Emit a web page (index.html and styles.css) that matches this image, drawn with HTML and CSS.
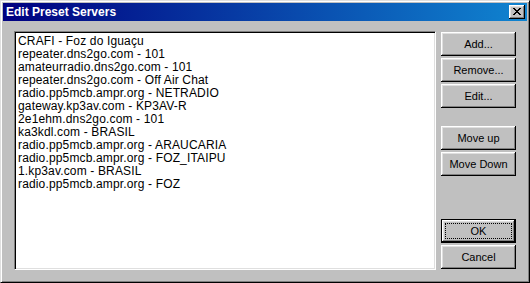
FILE: index.html
```html
<!DOCTYPE html>
<html>
<head>
<meta charset="utf-8">
<link rel="stylesheet" href="styles.css">
</head>
<body>
<div class="window">
  <div class="titlebar">
    <span class="title">Edit Preset Servers</span>
    <span class="close"><svg width="8" height="7" viewBox="0 0 8 7"><path d="M0 0h2v1h1v1h2v-1h1v-1h2v1h-1v1h-1v1h-1v1h1v1h1v1h1v1h-2v-1h-1v-1h-2v1h-1v1h-2v-1h1v-1h1v-1h1v-1h-1v-1h-1v-1h-1z" fill="#000"/></svg></span>
  </div>
  <div class="body">
    <div class="listbox">
      <div class="item">CRAFI - Foz do Iguaçu</div>
      <div class="item">repeater.dns2go.com - 101</div>
      <div class="item">amateurradio.dns2go.com - 101</div>
      <div class="item">repeater.dns2go.com - Off Air Chat</div>
      <div class="item">radio.pp5mcb.ampr.org - NETRADIO</div>
      <div class="item">gateway.kp3av.com - KP3AV-R</div>
      <div class="item">2e1ehm.dns2go.com - 101</div>
      <div class="item">ka3kdl.com - BRASIL</div>
      <div class="item">radio.pp5mcb.ampr.org - ARAUCARIA</div>
      <div class="item">radio.pp5mcb.ampr.org - FOZ_ITAIPU</div>
      <div class="item">1.kp3av.com - BRASIL</div>
      <div class="item">radio.pp5mcb.ampr.org - FOZ</div>
    </div>
    <div class="buttons">
      <div class="group">
        <button class="btn">Add...</button>
        <button class="btn">Remove...</button>
        <button class="btn">Edit...</button>
      </div>
      <div class="group">
        <button class="btn">Move up</button>
        <button class="btn">Move Down</button>
      </div>
      <div class="group bottom">
        <button class="btn default"><span class="focus">OK</span></button>
        <button class="btn">Cancel</button>
      </div>
    </div>
  </div>
</div>
</body>
</html>
```

FILE: styles.css
```css
html, body {
  margin: 0;
  padding: 0;
  background: #c0c0c0;
}
.window {
  width: 530px;
  height: 283px;
  box-sizing: border-box;
  background: #c0c0c0;
  border: 1px solid;
  border-color: #dfdfdf #000 #000 #dfdfdf;
  box-shadow: inset 1px 1px 0 #fff, inset -1px -1px 0 #808080;
  padding: 2px;
  display: flex;
  flex-direction: column;
  font-family: "Liberation Sans", Arial, sans-serif;
  font-size: 11px;
  color: #000;
}
.titlebar {
  height: 18px;
  background: linear-gradient(to right, #000080, #1084d0);
  display: flex;
  align-items: center;
  justify-content: space-between;
  padding: 0 2px 0 3px;
}
.title {
  color: #fff;
  font-weight: bold;
  font-size: 12px;
}
.close {
  width: 16px;
  height: 14px;
  box-sizing: border-box;
  background: #c0c0c0;
  box-shadow: inset -1px -1px 0 #000, inset 1px 1px 0 #fff, inset -2px -2px 0 #808080, inset 2px 2px 0 #dfdfdf;
  display: flex;
  align-items: center;
  justify-content: center;
  padding: 0 1px 1px 0;
}
.close svg { display: block; }
.body {
  flex: 1;
  display: flex;
  gap: 5px;
  padding: 10px 9px 10px 11px;
}
.listbox {
  width: 422px;
  box-sizing: border-box;
  background: #fff;
  border: 1px solid;
  border-color: #808080 #fff #fff #808080;
  box-shadow: inset 1px 1px 0 #000, inset -1px -1px 0 #dfdfdf;
  padding: 3px 3px;
  font-size: 12px;
  letter-spacing: 0.15px;
}
.item {
  height: 13px;
  line-height: 13px;
  white-space: nowrap;
}
.buttons {
  width: 75px;
  display: flex;
  flex-direction: column;
  gap: 18px;
  padding-top: 1px;
}
.group {
  display: flex;
  flex-direction: column;
  gap: 2px;
}
.group.bottom {
  margin-top: auto;
  margin-bottom: 1px;
}
.btn {
  width: 75px;
  height: 24px;
  box-sizing: border-box;
  background: #c0c0c0;
  border: none;
  margin: 0;
  padding: 0;
  font-family: "Liberation Sans", Arial, sans-serif;
  font-size: 11px;
  color: #000;
  box-shadow: inset -1px -1px 0 #000, inset 1px 1px 0 #fff, inset -2px -2px 0 #808080, inset 2px 2px 0 #dfdfdf;
  display: flex;
  align-items: center;
  justify-content: center;
}
.btn.default {
  border: 1px solid #000;
  padding: 3px;
}
.focus {
  flex: 1;
  align-self: stretch;
  display: flex;
  align-items: center;
  justify-content: center;
  border: 1px dotted #000;
}
```
